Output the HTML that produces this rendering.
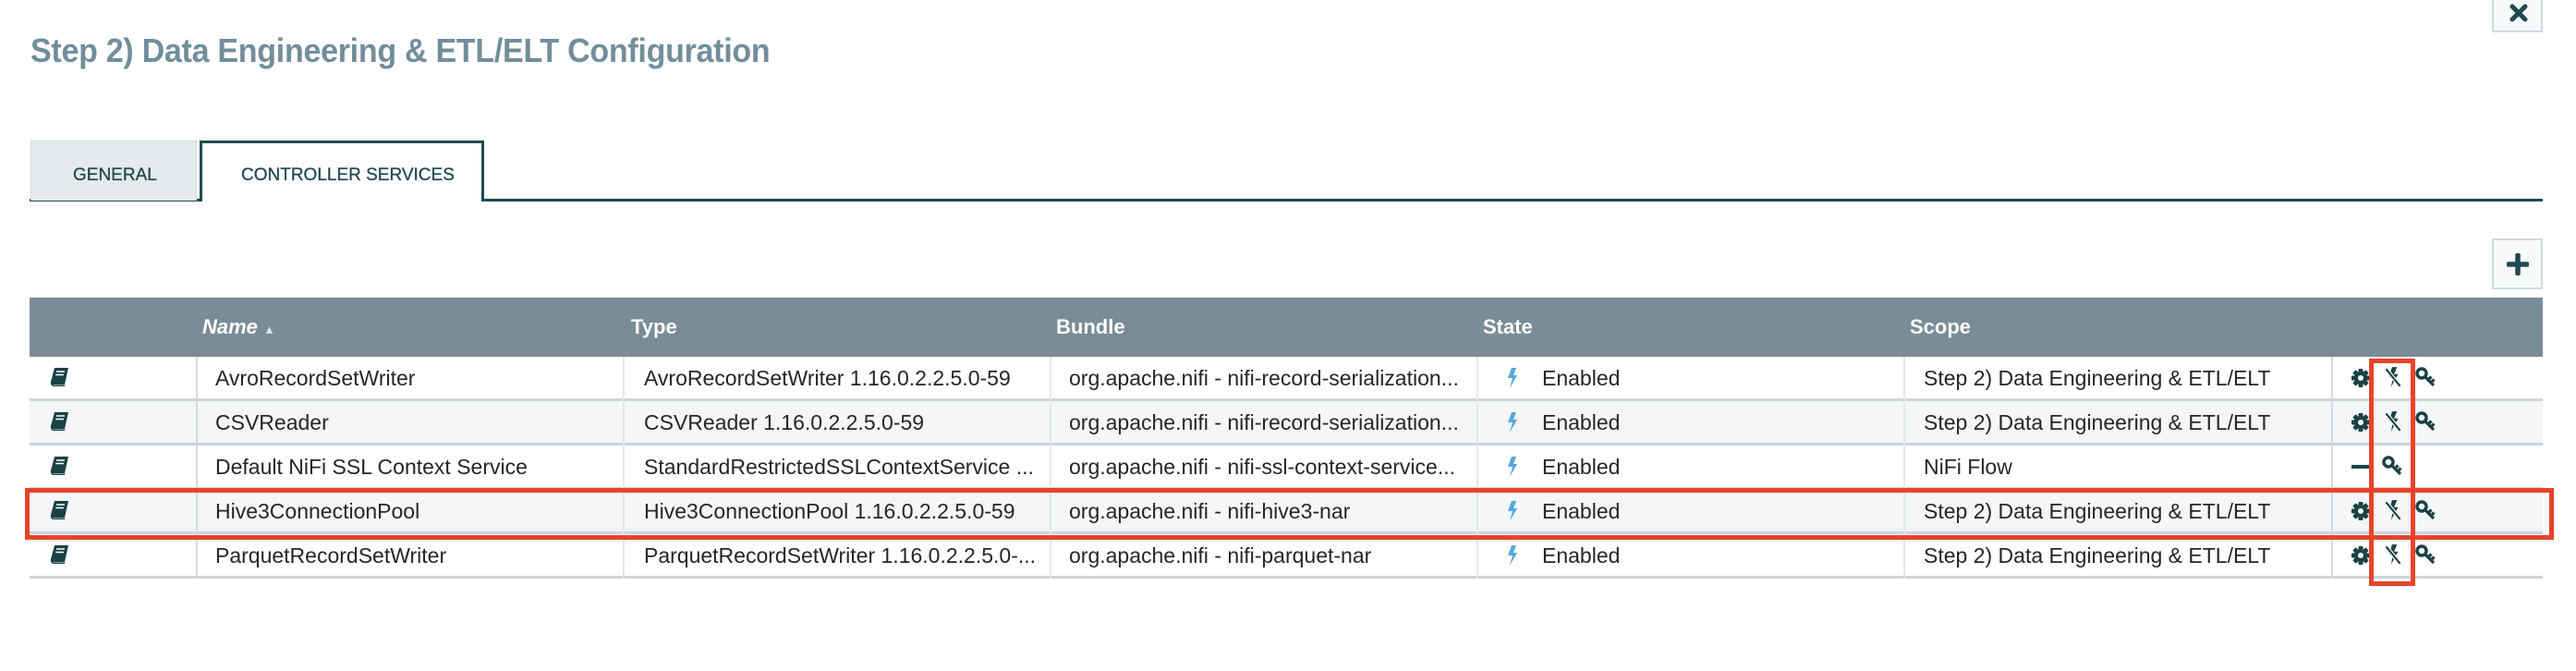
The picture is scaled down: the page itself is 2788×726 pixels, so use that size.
<!DOCTYPE html>
<html><head><meta charset="utf-8"><style>
*{margin:0;padding:0;box-sizing:border-box}
body{width:2788px;height:726px;background:#fff;position:relative;overflow:hidden;font-family:"Liberation Sans",sans-serif}
.abs{position:absolute}
.title{left:33px;top:34px;font-size:36px;font-weight:bold;color:#728e9b;white-space:nowrap;transform:scaleX(0.945);transform-origin:left top;letter-spacing:-0.3px}
.btn{position:absolute;left:2697px;width:55px;height:55px;border:2px solid #cfdbdc;background:#f7f9fa}
.tabline{left:32px;top:215px;width:2720px;height:3px;background:#1f4a4f}
.tab{position:absolute;top:152px;height:65px;font-size:19px;color:#1f4a4f;line-height:1;padding-top:27px;white-space:nowrap;transform-origin:left;-webkit-text-stroke:0.3px #1f4a4f}
.hdr{left:32px;top:322px;width:2720px;height:64px;background:#798c98}
.h{position:absolute;top:341px;font-size:22px;font-weight:bold;color:#fff}
.row{position:absolute;left:32px;width:2720px;height:48px;border-bottom:3px solid #cdd4d8}
.t{position:absolute;font-size:23px;color:#262626;white-space:nowrap;top:11px}
.red{position:absolute;border:5px solid #e8432a}
</style></head><body>
<div class="abs title">Step 2) Data Engineering &amp; ETL/ELT Configuration</div>
<div class="btn" style="top:-20px;height:55px"><svg class="abs" style="left:17px;top:22px" width="20" height="20" viewBox="0 0 20 20"><path d="M3 3L17 17M17 3L3 17" stroke="#1f4a4f" stroke-width="5" stroke-linecap="round"/></svg></div>
<div class="btn" style="top:258px"><svg class="abs" style="left:14px;top:14px" width="24" height="24" viewBox="0 0 24 24"><path d="M12 2V22M2 12H22" stroke="#1f4a4f" stroke-width="5.5" stroke-linecap="round"/></svg></div>
<div class="abs tabline"></div>
<div class="tab" style="left:33px;width:180px;background:#e5eaed;border:1px solid #d4dcdf;border-bottom:none;padding-left:45px">GENERAL</div>
<div class="tab" style="left:216px;width:308px;height:66px;background:#fff;border:3px solid #1f4a4f;border-bottom:none;padding-left:42px;padding-top:25px">CONTROLLER SERVICES</div>
<div class="abs hdr"></div>
<div class="h" style="left:219px;font-style:italic">Name <span style="font-size:13px;font-style:normal;color:#dde4e8">▲</span></div>
<div class="h" style="left:683px">Type</div>
<div class="h" style="left:1143px">Bundle</div>
<div class="h" style="left:1605px">State</div>
<div class="h" style="left:2067px">Scope</div>

<div class="row" style="top:386px;background:#fff"></div>
<div class="row" style="top:434px;background:#f4f6f7"></div>
<div class="row" style="top:482px;background:#fff"></div>
<div class="row" style="top:530px;background:#f4f6f7"></div>
<div class="row" style="top:578px;background:#fff"></div>
<div class="abs" style="left:212px;top:386px;width:2px;height:240px;background:#d4dbde"></div>
<div class="abs" style="left:674px;top:386px;width:2px;height:240px;background:#e3e7e9"></div>
<div class="abs" style="left:1136px;top:386px;width:2px;height:240px;background:#e3e7e9"></div>
<div class="abs" style="left:1598px;top:386px;width:2px;height:240px;background:#e3e7e9"></div>
<div class="abs" style="left:2060px;top:386px;width:2px;height:240px;background:#e3e7e9"></div>
<div class="abs" style="left:2523px;top:386px;width:2px;height:240px;background:#d4dbde"></div>

<svg width="0" height="0" style="position:absolute"><defs>
<symbol id="book" viewBox="0 0 22 22"><path d="M6 1H21L17 19H4Q1 19 2 16Z" fill="#1a4245"/><path d="M2 17Q2 21 5 21H17L17.5 19.5H5Q3.5 19.5 4 17Z" fill="#1a4245"/><path d="M8 5H17M7.3 8.5H16" stroke="#fff" stroke-width="1.6"/></symbol>
<symbol id="bolt" viewBox="0 0 14 22"><path d="M6 0L2 11H7L4 22L12 8H8L11 0Z" fill="#55a9dc"/></symbol>
<symbol id="gear" viewBox="0 0 20 20"><g fill="#1a4245"><circle cx="10" cy="10" r="7"/><rect x="7.5" y="0" width="5" height="20" rx="1"/><rect x="0" y="7.5" width="20" height="5" rx="1"/><rect x="7.5" y="0" width="5" height="20" rx="1" transform="rotate(45 10 10)"/><rect x="7.5" y="0" width="5" height="20" rx="1" transform="rotate(-45 10 10)"/></g><circle cx="10" cy="10" r="3" fill="#fff"/></symbol>
<symbol id="nob" viewBox="0 0 22 22"><path d="M10 1L7 11H11L9 21L16 8H12L15 1Z" fill="#1a4245"/><path d="M4 3L18 20" stroke="#fff" stroke-width="4"/><path d="M4 3L18 20" stroke="#1a4245" stroke-width="2"/></symbol>
<symbol id="key" viewBox="0 0 22 22"><circle cx="7" cy="7" r="5" fill="none" stroke="#1a4245" stroke-width="3.5"/><path d="M10.5 10.5L20 20M14 14L17.5 10.5M17 17L20.5 13.5" stroke="#1a4245" stroke-width="3.2"/></symbol>
</defs></svg>

<!-- row 1 -->
<svg class="abs" style="left:53px;top:397px" width="22" height="22"><use href="#book"/></svg>
<div class="t" style="left:233px;top:396px">AvroRecordSetWriter</div>
<div class="t" style="left:697px;top:396px">AvroRecordSetWriter 1.16.0.2.2.5.0-59</div>
<div class="t" style="left:1157px;top:396px">org.apache.nifi - nifi-record-serialization...</div>
<svg class="abs" style="left:1630px;top:398px" width="14" height="22"><use href="#bolt"/></svg>
<div class="t" style="left:1669px;top:396px">Enabled</div>
<div class="t" style="left:2082px;top:396px">Step 2) Data Engineering &amp; ETL/ELT</div>
<svg class="abs" style="left:2545px;top:399px" width="20" height="20"><use href="#gear"/></svg>
<svg class="abs" style="left:2578px;top:396px" width="24" height="24"><use href="#nob"/></svg>
<svg class="abs" style="left:2614px;top:397px" width="22" height="22"><use href="#key"/></svg>
<!-- row 2 -->
<svg class="abs" style="left:53px;top:445px" width="22" height="22"><use href="#book"/></svg>
<div class="t" style="left:233px;top:444px">CSVReader</div>
<div class="t" style="left:697px;top:444px">CSVReader 1.16.0.2.2.5.0-59</div>
<div class="t" style="left:1157px;top:444px">org.apache.nifi - nifi-record-serialization...</div>
<svg class="abs" style="left:1630px;top:446px" width="14" height="22"><use href="#bolt"/></svg>
<div class="t" style="left:1669px;top:444px">Enabled</div>
<div class="t" style="left:2082px;top:444px">Step 2) Data Engineering &amp; ETL/ELT</div>
<svg class="abs" style="left:2545px;top:447px" width="20" height="20"><use href="#gear"/></svg>
<svg class="abs" style="left:2578px;top:444px" width="24" height="24"><use href="#nob"/></svg>
<svg class="abs" style="left:2614px;top:445px" width="22" height="22"><use href="#key"/></svg>
<!-- row 3 -->
<svg class="abs" style="left:53px;top:493px" width="22" height="22"><use href="#book"/></svg>
<div class="t" style="left:233px;top:492px">Default NiFi SSL Context Service</div>
<div class="t" style="left:697px;top:492px">StandardRestrictedSSLContextService ...</div>
<div class="t" style="left:1157px;top:492px">org.apache.nifi - nifi-ssl-context-service...</div>
<svg class="abs" style="left:1630px;top:494px" width="14" height="22"><use href="#bolt"/></svg>
<div class="t" style="left:1669px;top:492px">Enabled</div>
<div class="t" style="left:2082px;top:492px">NiFi Flow</div>
<div class="abs" style="left:2545px;top:503px;width:20px;height:4px;background:#1a4245"></div>
<svg class="abs" style="left:2578px;top:493px" width="22" height="22"><use href="#key"/></svg>
<!-- row 4 -->
<svg class="abs" style="left:53px;top:541px" width="22" height="22"><use href="#book"/></svg>
<div class="t" style="left:233px;top:540px">Hive3ConnectionPool</div>
<div class="t" style="left:697px;top:540px">Hive3ConnectionPool 1.16.0.2.2.5.0-59</div>
<div class="t" style="left:1157px;top:540px">org.apache.nifi - nifi-hive3-nar</div>
<svg class="abs" style="left:1630px;top:542px" width="14" height="22"><use href="#bolt"/></svg>
<div class="t" style="left:1669px;top:540px">Enabled</div>
<div class="t" style="left:2082px;top:540px">Step 2) Data Engineering &amp; ETL/ELT</div>
<svg class="abs" style="left:2545px;top:543px" width="20" height="20"><use href="#gear"/></svg>
<svg class="abs" style="left:2578px;top:540px" width="24" height="24"><use href="#nob"/></svg>
<svg class="abs" style="left:2614px;top:541px" width="22" height="22"><use href="#key"/></svg>
<!-- row 5 -->
<svg class="abs" style="left:53px;top:589px" width="22" height="22"><use href="#book"/></svg>
<div class="t" style="left:233px;top:588px">ParquetRecordSetWriter</div>
<div class="t" style="left:697px;top:588px">ParquetRecordSetWriter 1.16.0.2.2.5.0-...</div>
<div class="t" style="left:1157px;top:588px">org.apache.nifi - nifi-parquet-nar</div>
<svg class="abs" style="left:1630px;top:590px" width="14" height="22"><use href="#bolt"/></svg>
<div class="t" style="left:1669px;top:588px">Enabled</div>
<div class="t" style="left:2082px;top:588px">Step 2) Data Engineering &amp; ETL/ELT</div>
<svg class="abs" style="left:2545px;top:591px" width="20" height="20"><use href="#gear"/></svg>
<svg class="abs" style="left:2578px;top:588px" width="24" height="24"><use href="#nob"/></svg>
<svg class="abs" style="left:2614px;top:589px" width="22" height="22"><use href="#key"/></svg>

<div class="red" style="left:27px;top:528px;width:2737px;height:56px"></div>
<div class="red" style="left:2564px;top:388px;width:50px;height:246px"></div>
</body></html>
